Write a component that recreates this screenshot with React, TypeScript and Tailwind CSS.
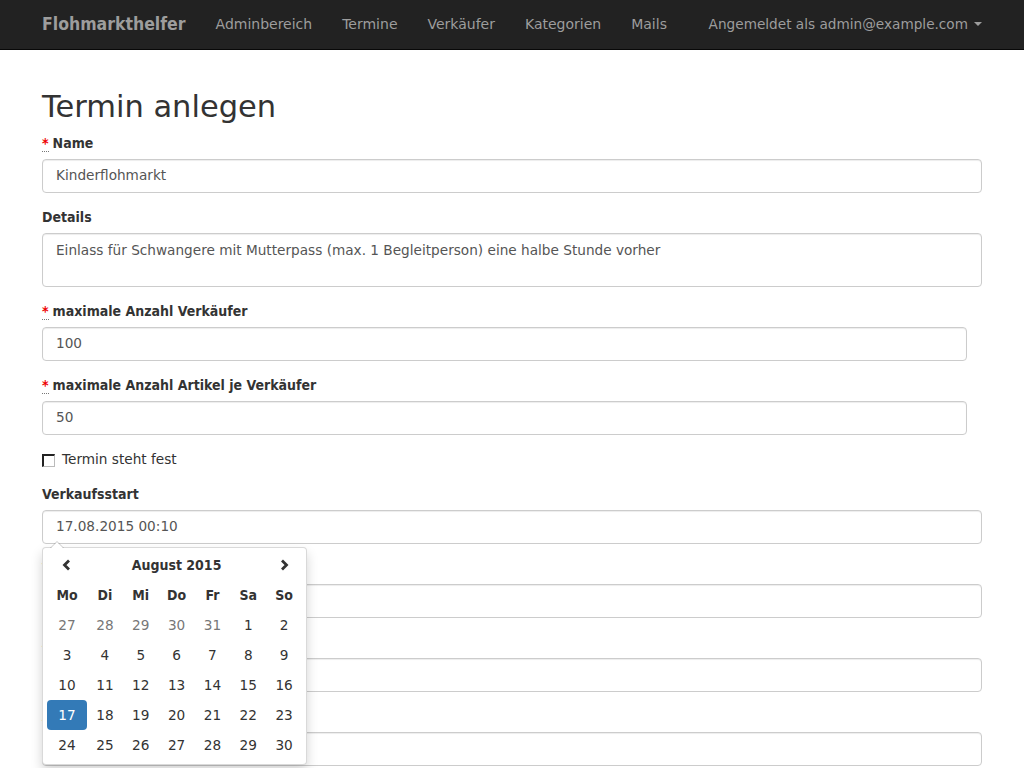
import React from "react";

const NAV = ["Adminbereich", "Termine", "Verkäufer", "Kategorien", "Mails"];
const DAYS = ["Mo", "Di", "Mi", "Do", "Fr", "Sa", "So"];
const WEEKS = [
  [27, 28, 29, 30, 31, 1, 2],
  [3, 4, 5, 6, 7, 8, 9],
  [10, 11, 12, 13, 14, 15, 16],
  [17, 18, 19, 20, 21, 22, 23],
  [24, 25, 26, 27, 28, 29, 30],
];

// bold text in the screenshot is narrower than DejaVu Sans Bold
const BOLD = "font-['DejaVu_Sans_Condensed','DejaVu_Sans',sans-serif] font-bold text-sm";

function Req() {
  return (
    <abbr className="text-[#e00] no-underline border-b border-dotted border-[#777] mr-1">*</abbr>
  );
}

function Field({
  label,
  value,
  required,
  narrow,
}: {
  label: string;
  value?: string;
  required?: boolean;
  narrow?: boolean;
}) {
  return (
    <div className="mb-[14px]">
      <label className={`block mb-[6px] leading-5 ${BOLD}`}>
        {required && <Req />}
        {label}
      </label>
      <div
        className={`h-[34px] border border-[#ccc] rounded bg-white px-[13px] pb-px flex items-center text-[#555] shadow-[inset_0_1px_1px_rgba(0,0,0,0.075)] ${
          narrow ? "w-[925px]" : "w-full"
        }`}
      >
        {value}
      </div>
    </div>
  );
}

function Datepicker() {
  return (
    <div className="absolute left-0 top-[37px] w-[265px] bg-white border border-[rgba(0,0,0,0.15)] rounded shadow-[0_6px_12px_rgba(0,0,0,0.175)] px-1 pt-[2px] pb-1 z-10">
      <div className="absolute -top-[7px] left-[7px] w-0 h-0 border-x-[7px] border-x-transparent border-b-[7px] border-b-[rgba(0,0,0,0.2)]" />
      <div className="absolute -top-[6px] left-[8px] w-0 h-0 border-x-[6px] border-x-transparent border-b-[6px] border-b-white" />
      <div className="grid grid-cols-[40px_repeat(6,1fr)] text-center text-[#333]">
        <div className="h-[30px] flex items-center justify-center">
          <svg width="10" height="12" viewBox="0 0 10 12">
            <path d="M7 1.5 L2.5 6 L7 10.5" fill="none" stroke="#333" strokeWidth="2.8" />
          </svg>
        </div>
        <div className={`col-span-5 h-[30px] flex items-center justify-center ${BOLD}`}>August 2015</div>
        <div className="h-[30px] flex items-center justify-center">
          <svg width="10" height="12" viewBox="0 0 10 12">
            <path d="M3 1.5 L7.5 6 L3 10.5" fill="none" stroke="#333" strokeWidth="2.8" />
          </svg>
        </div>
        {DAYS.map((d) => (
          <div key={d} className={`h-[30px] flex items-center justify-center ${BOLD}`}>
            {d}
          </div>
        ))}
        {WEEKS.map((w, wi) =>
          w.map((d, di) => {
            const old = wi === 0 && d > 20;
            const sel = wi === 3 && di === 0;
            return (
              <div
                key={`${wi}-${di}`}
                className={`h-[30px] flex items-center justify-center rounded ${
                  sel ? "bg-[#337ab7] text-white" : old ? "text-[#777]" : ""
                }`}
              >
                {d}
              </div>
            );
          })
        )}
      </div>
    </div>
  );
}

export default function App() {
  return (
    <div className="min-h-[768px] bg-white font-['DejaVu_Sans',sans-serif] text-[13.65px] text-[#333]">
      <nav className="h-[50px] bg-[#222] border-b border-[#080808]">
        <div className="w-[970px] mx-auto px-[15px] flex items-center h-full">
          <span className="font-['DejaVu_Sans_Condensed','DejaVu_Sans',sans-serif] text-[17.5px] font-bold text-[#9d9d9d] mr-[15px] whitespace-nowrap">
            Flohmarkthelfer
          </span>
          {NAV.map((n) => (
            <span key={n} className="px-[15px] text-[14px] text-[#9d9d9d] whitespace-nowrap">
              {n}
            </span>
          ))}
          <span className="ml-auto text-[#9d9d9d] flex items-center whitespace-nowrap">
            Angemeldet als admin@example.com
            <span className="ml-[6px] w-0 h-0 border-x-4 border-x-transparent border-t-4 border-t-[#9d9d9d]" />
          </span>
        </div>
      </nav>

      <div className="w-[970px] mx-auto px-[15px] pt-5">
        <h2 className="text-[30.5px] leading-[33px] font-normal mt-5 mb-[10px]">Termin anlegen</h2>

        <Field label="Name" value="Kinderflohmarkt" required />

        <div className="mb-[14px]">
          <label className={`block mb-[6px] leading-5 ${BOLD}`}>Details</label>
          <div className="h-[54px] border border-[#ccc] rounded px-[13px] py-[6px] text-[#555] leading-5 shadow-[inset_0_1px_1px_rgba(0,0,0,0.075)]">
            Einlass für Schwangere mit Mutterpass (max. 1 Begleitperson) eine halbe Stunde vorher
          </div>
        </div>

        <Field label="maximale Anzahl Verkäufer" value="100" required narrow />
        <Field label="maximale Anzahl Artikel je Verkäufer" value="50" required narrow />

        <div className="flex items-center h-5 mb-[15px]">
          <span className="w-[13px] h-[13px] border border-[#bbb] border-l-2 border-t-2 border-l-[#222] border-t-[#222] bg-white mr-[7px] mt-[2px]" />
          <span>Termin steht fest</span>
        </div>

        <div className="mb-[14px]">
          <label className={`block mb-[6px] leading-5 ${BOLD}`}>Verkaufsstart</label>
          <div className="relative">
            <div className="h-[34px] border border-[#ccc] rounded px-[13px] pb-px flex items-center text-[#555] shadow-[inset_0_1px_1px_rgba(0,0,0,0.075)]">
              17.08.2015 00:10
            </div>
            <Datepicker />
          </div>
        </div>

        <Field label="Verkaufsende" value="" />
        <Field label="Abgabe Beginn" value="" />
        <Field label="Abgabe Ende" value="" />
      </div>
    </div>
  );
}
